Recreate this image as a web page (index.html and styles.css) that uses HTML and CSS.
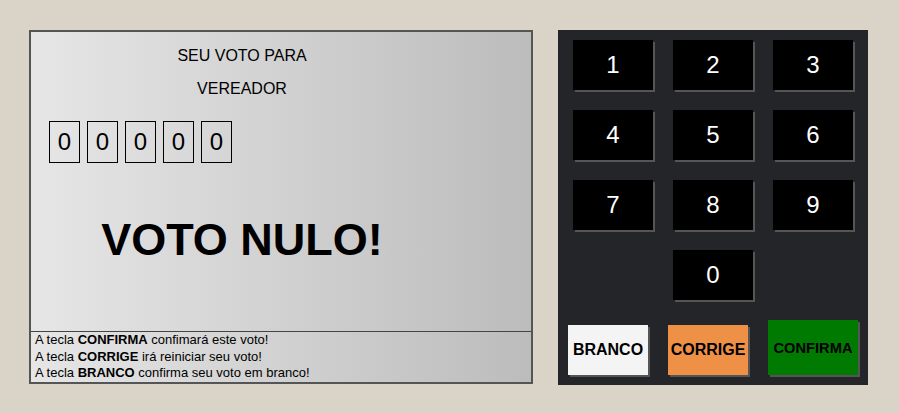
FILE: index.html
```html
<!DOCTYPE html>
<html lang="pt-BR">
<head>
<meta charset="utf-8">
<title>Urna</title>
<link rel="stylesheet" href="styles.css">
</head>
<body>
<div class="urna">
  <div class="tela">
    <div class="tela-main">
      <div class="tela-left">
        <div class="titulo">SEU VOTO PARA</div>
        <div class="cargo">VEREADOR</div>
        <div class="numeros">
          <div class="numero">0</div>
          <div class="numero">0</div>
          <div class="numero">0</div>
          <div class="numero">0</div>
          <div class="numero">0</div>
        </div>
        <div class="aviso">VOTO NULO!</div>
      </div>
    </div>
    <div class="tela-rodape">
      <div>A tecla <b>CONFIRMA</b> confimará este voto!</div>
      <div>A tecla <b>CORRIGE</b> irá reiniciar seu voto!</div>
      <div>A tecla <b>BRANCO</b> confirma seu voto em branco!</div>
    </div>
  </div>
  <div class="teclado">
    <div class="teclas">
      <div class="tecla">1</div>
      <div class="tecla">2</div>
      <div class="tecla">3</div>
      <div class="tecla">4</div>
      <div class="tecla">5</div>
      <div class="tecla">6</div>
      <div class="tecla">7</div>
      <div class="tecla">8</div>
      <div class="tecla">9</div>
      <div class="tecla tecla-zero">0</div>
    </div>
    <div class="botoes">
      <div class="botao branco">BRANCO</div>
      <div class="botao corrige">CORRIGE</div>
      <div class="botao confirma">CONFIRMA</div>
    </div>
  </div>
</div>
</body>
</html>
```
FILE: styles.css
```css
html, body {
  margin: 0;
  padding: 0;
}
body {
  background: #d9d3c8;
  font-family: "Liberation Sans", Arial, sans-serif;
  color: #000;
}
.urna {
  display: flex;
  align-items: flex-start;
  gap: 25px;
  padding: 30px 0 0 29px;
}
.tela {
  width: 500px;
  height: 350px;
  border: 2px solid #555;
  background: linear-gradient(to right, #e6e6e6, #bcbcbc);
  display: flex;
  flex-direction: column;
}
.tela-main {
  height: 299px;
  display: flex;
}
.tela-left {
  width: 422px;
  display: flex;
  flex-direction: column;
  align-items: center;
}
.titulo {
  margin-top: 15px;
  font-size: 16px;
  line-height: 18px;
}
.cargo {
  margin-top: 15px;
  font-size: 16px;
  line-height: 18px;
}
.numeros {
  align-self: flex-start;
  margin: 23px 0 0 18px;
  display: flex;
  gap: 7px;
}
.numero {
  box-sizing: border-box;
  width: 31px;
  height: 42px;
  border: 1px solid #000;
  font-size: 24px;
  display: flex;
  align-items: center;
  justify-content: center;
}
.aviso {
  margin-top: 51px;
  font-size: 45px;
  font-weight: bold;
  line-height: 51px;
}
.tela-rodape {
  box-sizing: border-box;
  height: 51px;
  border-top: 1px solid #444;
  padding-left: 4px;
  font-size: 13px;
  line-height: 16.5px;
}
.teclado {
  width: 310px;
  height: 355px;
  box-sizing: border-box;
  background: #242528;
  padding: 10px 10px 10px 15px;
}
.teclas {
  display: grid;
  grid-template-columns: repeat(3, 80px);
  grid-auto-rows: 50px;
  gap: 20px;
}
.tecla {
  background: #000;
  color: #fff;
  font-size: 24px;
  display: flex;
  align-items: center;
  justify-content: center;
  box-shadow: 2px 2px 0 #555;
}
.tecla-zero {
  grid-column: 2;
}
.botoes {
  margin: 20px 0 0 -5px;
  height: 55px;
  display: flex;
  align-items: flex-end;
  gap: 20px;
}
.botao {
  width: 80px;
  height: 50px;
  display: flex;
  align-items: center;
  justify-content: center;
  font-weight: bold;
  font-size: 16px;
  box-shadow: 2px 2px 0 #555;
}
.branco {
  background: #f4f4f4;
}
.corrige {
  background: #ef9047;
}
.confirma {
  width: 90px;
  height: 55px;
  background: #007a00;
  font-size: 14.67px;
}
```
